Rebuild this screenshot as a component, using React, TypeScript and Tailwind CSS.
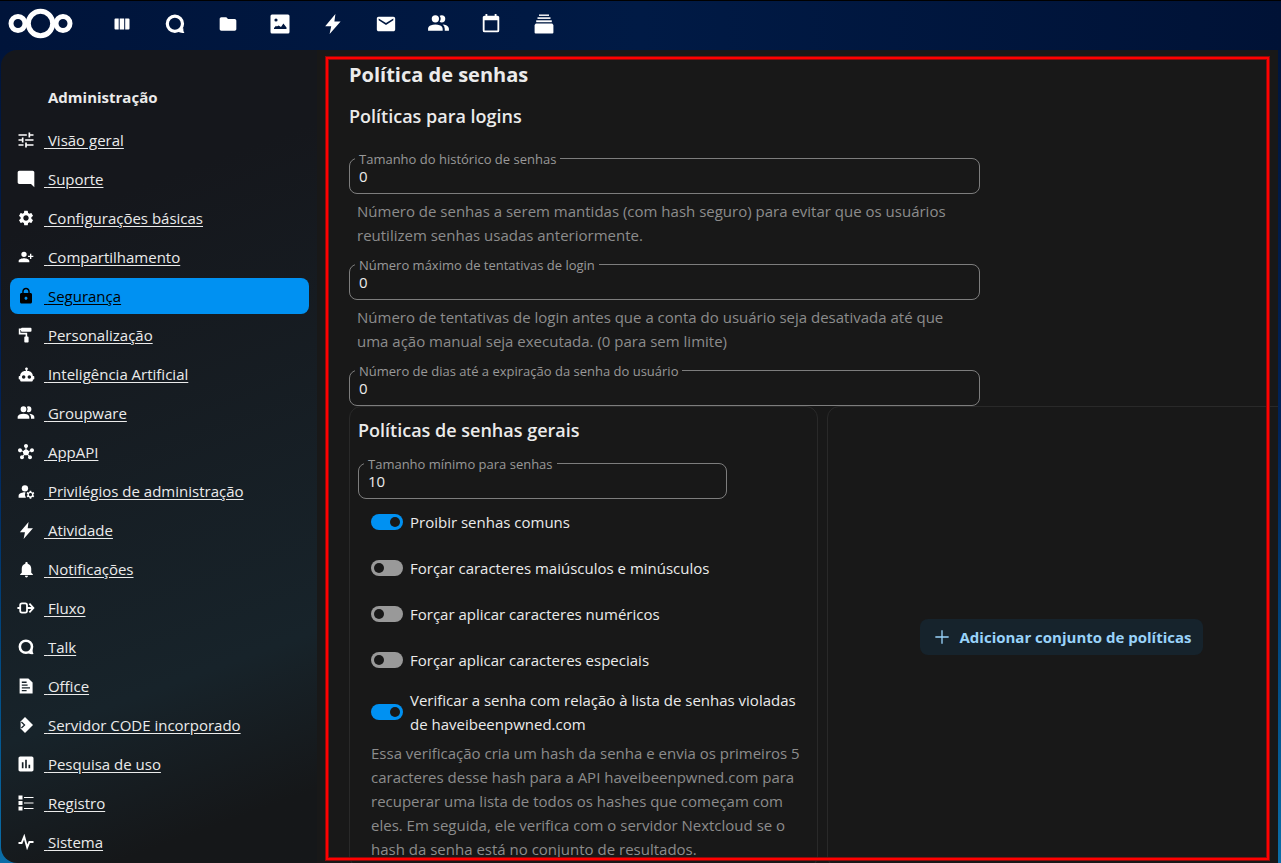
import { useId, useState, type ReactNode } from "react";
import {
  MdFolder,
  MdHub,
  MdLock,
  MdMail,
  MdManageAccounts,
  MdModeComment,
  MdNotifications,
  MdPoll,
  MdSettings,
  MdTune,
} from "react-icons/md";

type SvgProps = { size: number; box?: string; children: ReactNode };

function Svg({ size, box = "0 0 24 24", children }: SvgProps) {
  return (
    <svg width={size} height={size} viewBox={box} fill="currentColor" className="shrink-0" aria-hidden="true">
      {children}
    </svg>
  );
}

function TalkIcon({ size }: { size: number }) {
  return (
    <Svg size={size} box="0 0 20 20">
      <circle cx="9.9" cy="9.7" r="7.6" fill="none" stroke="currentColor" strokeWidth="3.2" />
      <path d="M12.6 17.6 Q15.8 19.6 19.4 18.9 Q18 17 18.3 14.2 L15 14 Z" />
    </Svg>
  );
}

function BoltIcon({ size }: { size: number }) {
  return (
    <Svg size={size} box="0 0 20 20">
      <path d="M12.4 0 L2.2 12.2 H8.2 L6.6 20 L17.6 7.4 H11.4 Z" />
    </Svg>
  );
}

function PeopleIcon({ size }: { size: number }) {
  return (
    <Svg size={size}>
      <path d="M16 17V19H2V17S2 13 9 13 16 17 16 17M12.5 7.5A3.5 3.5 0 1 0 9 11A3.5 3.5 0 0 0 12.5 7.5M15.94 13A5.32 5.32 0 0 1 18 17V19H22V17S22 13.37 15.94 13M15 4A3.39 3.39 0 0 0 13.07 4.59A5 5 0 0 1 13.07 10.41A3.39 3.39 0 0 0 15 11A3.5 3.5 0 0 0 15 4Z" />
    </Svg>
  );
}

const apps: { label: string; icon: ReactNode }[] = [
  {
    label: "Painel",
    icon: (
      <Svg size={16} box="0 0 16 16">
        <path d="M0.5 3.5 Q0.5 2.5 1.5 2.5 H4.7 V13.5 H1.5 Q0.5 13.5 0.5 12.5 Z M5.7 2.5 H10.2 V13.5 H5.7 Z M11.2 2.5 H14.5 Q15.5 2.5 15.5 3.5 V12.5 Q15.5 13.5 14.5 13.5 H11.2 Z" />
      </Svg>
    ),
  },
  { label: "Talk", icon: <TalkIcon size={20} /> },
  { label: "Arquivos", icon: <MdFolder size={20} /> },
  {
    label: "Fotos",
    icon: (
      <Svg size={20} box="0 0 20 20">
        <path
          fillRule="evenodd"
          d="M2 0.5 H18 Q19.5 0.5 19.5 2 V18 Q19.5 19.5 18 19.5 H2 Q0.5 19.5 0.5 18 V2 Q0.5 0.5 2 0.5 Z M6 4.4 A1.6 1.6 0 1 0 6 7.6 A1.6 1.6 0 1 0 6 4.4 Z M4 15 H16.5 V13.4 L13.4 9.6 L11 13 L8.6 11.4 L6.8 12.6 L6 11.8 L4 14 Z"
        />
      </Svg>
    ),
  },
  { label: "Atividade", icon: <BoltIcon size={20} /> },
  { label: "E-mail", icon: <MdMail size={22} /> },
  { label: "Contatos", icon: <PeopleIcon size={25} /> },
  {
    label: "Calendário",
    icon: (
      <Svg size={22}>
        <path d="M19,19H5V8H19M16,1V3H8V1H6V3H5C3.89,3 3,3.89 3,5V19A2,2 0 0,0 5,21H19A2,2 0 0,0 21,19V5C21,3.89 20.1,3 19,3H18V1" />
      </Svg>
    ),
  },
  {
    label: "Deck",
    icon: (
      <Svg size={20} box="0 0 20 20">
        <rect x="5" y="0.5" width="10" height="1.4" />
        <rect x="3.5" y="3.3" width="13" height="1.6" />
        <rect x="2.2" y="6.3" width="15.6" height="1.9" />
        <path d="M1.8 9.5 H18.2 L19.4 11 V18.5 Q19.4 19.5 18.4 19.5 H1.6 Q0.6 19.5 0.6 18.5 V11 Z" />
      </Svg>
    ),
  },
];

const sections: { label: string; icon: ReactNode }[] = [
  { label: "Visão geral", icon: <MdTune size={20} className="shrink-0" /> },
  { label: "Suporte", icon: <MdModeComment size={20} className="shrink-0" /> },
  { label: "Configurações básicas", icon: <MdSettings size={18} className="shrink-0" /> },
  {
    label: "Compartilhamento",
    icon: (
      <Svg size={16}>
        <path
          transform="matrix(-1 0 0 1 24 0)"
          d="M15,14C12.33,14 7,15.33 7,18V20H23V18C23,15.33 17.67,14 15,14M6,10V7H4V10H1V12H4V15H6V12H9V10M15,12A4,4 0 0,0 19,8A4,4 0 0,0 15,4A4,4 0 0,0 11,8A4,4 0 0,0 15,12Z"
        />
      </Svg>
    ),
  },
  { label: "Segurança", icon: <MdLock size={18} className="shrink-0" /> },
  {
    label: "Personalização",
    icon: (
      <Svg size={16} box="0 0 16 16">
        <rect x="3" y="0.7" width="10.5" height="4" rx="1" />
        <path d="M3.5 2.3 H1.6 V6.6 H8.4 V10" fill="none" stroke="currentColor" strokeWidth="1.6" />
        <rect x="6.3" y="9.6" width="4.3" height="6" rx="0.8" />
      </Svg>
    ),
  },
  {
    label: "Inteligência Artificial",
    icon: (
      <Svg size={17}>
        <path
          fillRule="evenodd"
          d="M22 14H21C21 10.13 17.87 7 14 7H13V5.73C13.6 5.39 14 4.74 14 4C14 2.9 13.11 2 12 2S10 2.9 10 4C10 4.74 10.4 5.39 11 5.73V7H10C6.13 7 3 10.13 3 14H2C1.45 14 1 14.45 1 15V18C1 18.55 1.45 19 2 19H3V20C3 21.11 3.9 22 5 22H19C20.11 22 21 21.11 21 20V19H22C22.55 19 23 18.55 23 18V15C23 14.45 22.55 14 22 14M8 13A2.5 2.5 0 1 0 8 18A2.5 2.5 0 1 0 8 13M16 13A2.5 2.5 0 1 0 16 18A2.5 2.5 0 1 0 16 13"
        />
      </Svg>
    ),
  },
  { label: "Groupware", icon: <PeopleIcon size={20} /> },
  { label: "AppAPI", icon: <MdHub size={16} className="shrink-0" /> },
  { label: "Privilégios de administração", icon: <MdManageAccounts size={19} className="shrink-0" /> },
  { label: "Atividade", icon: <BoltIcon size={17} /> },
  { label: "Notificações", icon: <MdNotifications size={19} className="shrink-0" /> },
  {
    label: "Fluxo",
    icon: (
      <Svg size={18} box="0 0 18 18">
        <g fill="none" stroke="currentColor" strokeWidth="1.8">
          <rect x="3.2" y="4.4" width="6.8" height="9.2" rx="1.8" />
          <path d="M0.4 9 H3 M10 9 H16.4 M12.4 4.6 L16.4 9 L12.4 13.4" />
        </g>
      </Svg>
    ),
  },
  { label: "Talk", icon: <TalkIcon size={16} /> },
  {
    label: "Office",
    icon: (
      <Svg size={16} box="0 0 16 16">
        <path
          fillRule="evenodd"
          d="M1.6 0.5 H10.4 L14.6 4.4 V15.5 H1.6 Z M3.8 3.6 V4.9 H8.6 V3.6 Z M3.8 6.4 V7.7 H9.6 V6.4 Z M3.8 9.2 V10.5 H12 V9.2 Z M3.8 12 V13.3 H8.6 V12 Z"
        />
      </Svg>
    ),
  },
  {
    label: "Servidor CODE incorporado",
    icon: (
      <Svg size={16} box="0 0 16 16">
        <path d="M7 0 L15 8 L7 16 L2.6 11.6 V4.4 Z" />
        <path d="M3.4 5 L6.6 8 L3.4 11" fill="none" stroke="#17222a" strokeWidth="1.2" />
      </Svg>
    ),
  },
  { label: "Pesquisa de uso", icon: <MdPoll size={20} className="shrink-0" /> },
  {
    label: "Registro",
    icon: (
      <Svg size={16} box="0 0 16 16">
        <path d="M0.5 0.5 H4.5 V4.5 H0.5 Z M0.5 6 H4.5 V10 H0.5 Z M0.5 11.5 H4.5 V15.5 H0.5 Z" />
        <path d="M6 2 H15.5 V3 H6 Z M6 7.5 H15.5 V8.5 H6 Z M6 13 H15.5 V14 H6 Z" />
      </Svg>
    ),
  },
  {
    label: "Sistema",
    icon: (
      <Svg size={16} box="0 0 16 16">
        <path d="M0.5 9 H3.6 L6.2 2.6 L9.2 13.4 L11.4 8 H15.5" fill="none" stroke="currentColor" strokeWidth="1.9" />
      </Svg>
    ),
  },
];

function NumberField({ label, value, hint }: { label: string; value: string; hint?: string }) {
  const id = useId();
  return (
    <div>
      <div className="relative">
        <input
          id={id}
          type="text"
          inputMode="numeric"
          defaultValue={value}
          className="block h-9 w-full rounded-lg border border-[#7d7d7d] bg-transparent px-[9px] text-[15px] text-[#ebebeb] outline-none"
        />
        <label
          htmlFor={id}
          className="absolute -top-2 left-[6px] bg-[#181818] px-1 text-[13px] leading-[18px] text-[#999999]"
        >
          {label}
        </label>
      </div>
      {hint && <p className="mt-[5px] mb-[17px] px-2 text-[15px] leading-6 text-[#8c8c8c]">{hint}</p>}
    </div>
  );
}

function Toggle({ label, on, tall }: { label: string; on?: boolean; tall?: boolean }) {
  const [checked, setChecked] = useState(!!on);
  return (
    <label className={`flex items-center gap-[7px] ${tall ? "min-h-[58px]" : "min-h-[46px]"}`}>
      <input
        type="checkbox"
        role="switch"
        checked={checked}
        onChange={(e) => setChecked(e.target.checked)}
        className="h-4 w-8 shrink-0 appearance-none rounded-full bg-[#999999] p-[3px] before:block before:size-[10px] before:rounded-full before:bg-[#181818] checked:bg-[#0091f2] checked:before:ml-4"
      />
      <span className="text-[15px] leading-6 text-[#ebebeb]">{label}</span>
    </label>
  );
}

function TopBar() {
  return (
    <header className="flex h-[50px] shrink-0 items-center border-t border-black bg-linear-to-r from-[#00143a] via-[#001a45] to-[#001236] pl-2 text-white">
      <a href="#" aria-label="Nextcloud" className="w-[88px] shrink-0 pb-1">
        <svg width="66" height="32" viewBox="0 0 66 32" fill="none" stroke="#ffffff" strokeWidth="5">
          <circle cx="32.5" cy="15.5" r="12.2" />
          <circle cx="10" cy="15.5" r="7" />
          <circle cx="55" cy="15.5" r="7" />
        </svg>
      </a>
      <nav className="flex w-[474px] pb-1">
        {apps.map((app) => (
          <a key={app.label} href="#" aria-label={app.label} className="flex h-8 flex-1 items-center justify-center">
            {app.icon}
          </a>
        ))}
      </nav>
    </header>
  );
}

function Sidebar() {
  return (
    <nav className="w-[316px] shrink-0 rounded-l-2xl bg-linear-160 from-[#15171c] from-20% via-[#17232a] via-75% to-[#151719] to-92% pr-2 pl-[9px]">
      <h2 className="pt-[35px] pb-[13px] pl-[38px] text-[15px] leading-6 font-bold text-[#ebebeb]">Administração</h2>
      <ul className="flex flex-col gap-[3px]">
        {sections.map((s) => (
          <li key={s.label}>
            <a
              href="#"
              className={`flex h-9 items-center gap-[10px] rounded-lg pl-2 text-[15px] underline underline-offset-2 ${
                s.label === "Segurança" ? "bg-[#0091f2] text-black" : "text-[#ebebeb]"
              }`}
            >
              <span className={`flex w-4 justify-center ${s.label === "Segurança" ? "text-black" : "text-white"}`}>
                {s.icon}
              </span>
              <span>&nbsp;{s.label}</span>
            </a>
          </li>
        ))}
      </ul>
    </nav>
  );
}

export default function App() {
  return (
    <div className="flex h-screen flex-col overflow-hidden bg-linear-to-b from-[#001338] via-[#00235a] to-[#0b6ea8] font-['Open_Sans','Noto_Sans',sans-serif]">
      <TopBar />
      <div className="flex min-h-0 flex-1 pr-[3px] pl-px">
        <Sidebar />
        <main className="relative min-w-0 flex-1 overflow-hidden bg-[#181818] pl-8">
          <h1 className="pt-[10px] text-xl leading-[30px] font-bold text-[#ebebeb]">Política de senhas</h1>
          <h2 className="mt-[11px] mb-[27px] text-lg leading-[30px] font-semibold text-[#ebebeb]">
            Políticas para logins
          </h2>

          <div className="max-w-[631px]">
            <NumberField
              label="Tamanho do histórico de senhas"
              value="0"
              hint="Número de senhas a serem mantidas (com hash seguro) para evitar que os usuários reutilizem senhas usadas anteriormente."
            />
            <NumberField
              label="Número máximo de tentativas de login"
              value="0"
              hint="Número de tentativas de login antes que a conta do usuário seja desativada até que uma ação manual seja executada. (0 para sem limite)"
            />
            <NumberField label="Número de dias até a expiração da senha do usuário" value="0" />
          </div>

          <div className="-mr-[18px] grid grid-cols-2 gap-[9px]">
            <section className="rounded-xl border border-[#292929] px-2 pb-[6px]">
              <h2 className="pt-2 pb-[18px] text-lg leading-[30px] font-semibold text-[#ebebeb]">
                Políticas de senhas gerais
              </h2>
              <div className="max-w-[369px]">
                <NumberField label="Tamanho mínimo para senhas" value="10" />
              </div>
              <div className="pr-2 pl-[13px]">
                <Toggle label="Proibir senhas comuns" on />
                <Toggle label="Forçar caracteres maiúsculos e minúsculos" />
                <Toggle label="Forçar aplicar caracteres numéricos" />
                <Toggle label="Forçar aplicar caracteres especiais" />
                <Toggle label="Verificar a senha com relação à lista de senhas violadas de haveibeenpwned.com" on tall />
                <p className="text-[15px] leading-6 text-[#8c8c8c]">
                  Essa verificação cria um hash da senha e envia os primeiros 5 caracteres desse hash para a API
                  haveibeenpwned.com para recuperar uma lista de todos os hashes que começam com eles. Em seguida, ele
                  verifica com o servidor Nextcloud se o hash da senha está no conjunto de resultados.
                </p>
              </div>
            </section>
            <section className="flex items-center justify-center rounded-xl border border-[#292929]">
              <button
                type="button"
                className="flex h-9 items-center gap-2 rounded-lg bg-[#16232c] px-3 text-[15px] font-bold text-[#99d3fa]"
              >
                <Svg size={20}>
                  <path d="M19 12.8H12.8V20H11.2V12.8H4V11.2H11.2V4H12.8V11.2H20V12.8Z" />
                </Svg>
                Adicionar conjunto de políticas
              </button>
            </section>
          </div>

          {/* Highlight frame around the policy settings */}
          <div className="pointer-events-none absolute top-[7px] right-[9px] bottom-[3px] left-[9px] border-2 border-[#ff0000] inset-ring inset-ring-[#8a0c0c] ring ring-[#8a0c0c]" />
        </main>
      </div>
    </div>
  );
}
